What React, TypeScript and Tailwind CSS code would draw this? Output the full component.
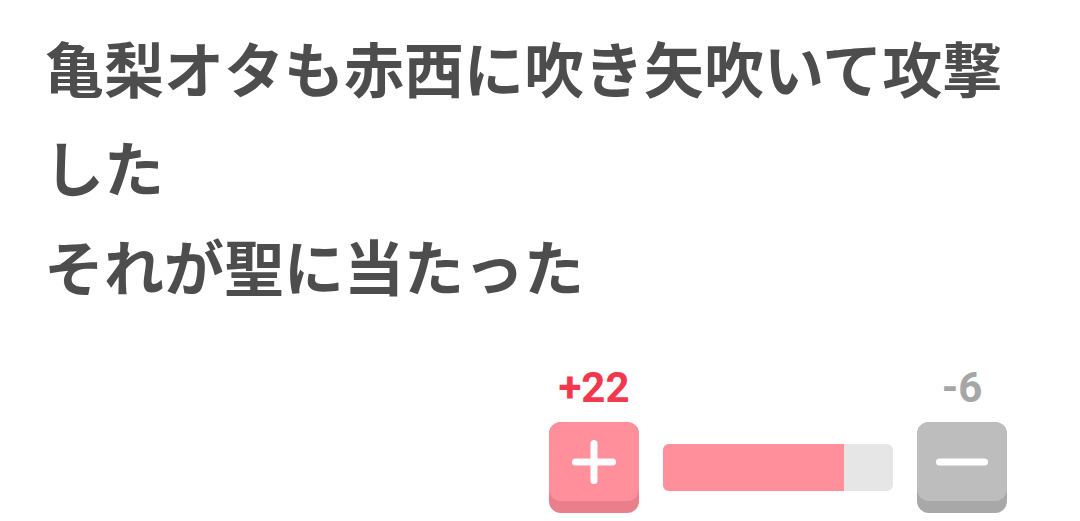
const votes = { up: 22, down: 6 };

const PlusIcon = () => (
  <svg width="44" height="44" viewBox="0 0 44 44">
    <path d="M22 3.5V40.5M3.5 22H40.5" stroke="#fff" strokeWidth="7" strokeLinecap="round" />
  </svg>
);

const MinusIcon = () => (
  <svg width="52" height="10" viewBox="0 0 52 10">
    <path d="M3.5 5H48.5" stroke="#fff" strokeWidth="7" strokeLinecap="round" />
  </svg>
);

const App = () => {
  const ratio = votes.up / (votes.up + votes.down);

  return (
    <div className="w-[1080px] h-[521px] bg-white overflow-hidden">
      <p
        className="px-[44px] pt-[17px] text-[60px] leading-[99px] font-bold text-[#4d4d4d]"
        style={{ fontFamily: '"Noto Sans CJK JP", "Noto Sans", sans-serif' }}
      >
        亀梨オタも赤西に吹き矢吹いて攻撃した
        <br />
        それが聖に当たった
      </p>

      <div className="flex justify-end pr-[73px] mt-[52px]">
        <div className="grid grid-cols-[90px_230px_90px] gap-x-[24px] items-center">
          <span
            className="text-center text-[42px] leading-[44px] font-bold text-[#f2384c]"
            style={{ fontFamily: "Roboto, sans-serif" }}
          >
            +{votes.up}
          </span>
          <span />
          <span
            className="text-center text-[42px] leading-[44px] font-bold text-[#a6a6a6]"
            style={{ fontFamily: "Roboto, sans-serif" }}
          >
            -{votes.down}
          </span>

          {/* upvote */}
          <button className="mt-[12px] rounded-[12px] bg-[#e97f8b] pb-[12px]">
            <div className="flex h-[79px] items-center justify-center rounded-[12px] bg-[#fe8f9b]">
              <PlusIcon />
            </div>
          </button>

          {/* ratio bar */}
          <div className="mt-[12px] h-[47px] rounded-[6px] bg-[#e6e6e6] overflow-hidden">
            <div className="h-full bg-[#fe8f9b]" style={{ width: `${ratio * 100}%` }} />
          </div>

          {/* downvote */}
          <button className="mt-[12px] rounded-[12px] bg-[#a8a8a8] pb-[12px]">
            <div className="flex h-[79px] items-center justify-center rounded-[12px] bg-[#bdbdbd]">
              <MinusIcon />
            </div>
          </button>
        </div>
      </div>
    </div>
  );
};

export default App;
